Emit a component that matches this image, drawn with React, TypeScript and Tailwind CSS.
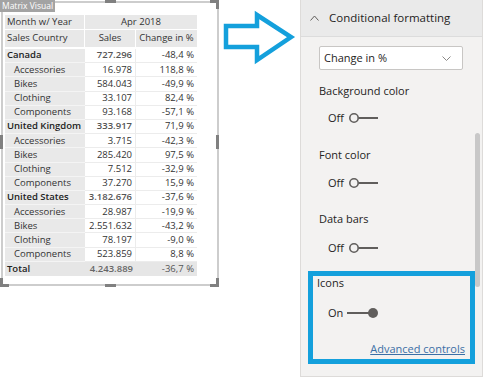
import React from 'react';

type Row = { label: string; sales: string; change: string; top?: boolean };

const ROWS: Row[] = [
  { label: 'Canada', sales: '727.296', change: '-48,4 %', top: true },
  { label: 'Accessories', sales: '16.978', change: '118,8 %' },
  { label: 'Bikes', sales: '584.043', change: '-49,9 %' },
  { label: 'Clothing', sales: '33.107', change: '82,4 %' },
  { label: 'Components', sales: '93.168', change: '-57,1 %' },
  { label: 'United Kingdom', sales: '333.917', change: '71,9 %', top: true },
  { label: 'Accessories', sales: '3.715', change: '-42,3 %' },
  { label: 'Bikes', sales: '285.420', change: '97,5 %' },
  { label: 'Clothing', sales: '7.512', change: '-32,9 %' },
  { label: 'Components', sales: '37.270', change: '15,9 %' },
  { label: 'United States', sales: '3.182.676', change: '-37,6 %', top: true },
  { label: 'Accessories', sales: '28.987', change: '-19,9 %' },
  { label: 'Bikes', sales: '2.551.632', change: '-43,2 %' },
  { label: 'Clothing', sales: '78.197', change: '-9,0 %' },
  { label: 'Components', sales: '523.859', change: '8,8 %' },
];

const Handle = ({ className }: { className: string }) => (
  <div className={`absolute bg-[#808080] ${className}`} />
);

const MatrixVisual = () => (
  <div className="relative w-[220px] h-[288px] shrink-0 p-[1px]">
    <div className="h-[285px] border-2 border-[#cdcdcd] pl-[2px] pt-[12px]">
      <div className="w-[192px] text-[9.5px] text-[#333333]">
        {/* header */}
        <div className="flex h-[14px] bg-[#e8e8e8]">
          <div className="w-[80px] pl-[2px] flex items-center border-r border-white">Month w/ Year</div>
          <div className="flex-1 flex items-center justify-center">Apr 2018</div>
        </div>
        <div className="flex h-[18px] bg-[#e8e8e8] border-t border-white">
          <div className="w-[80px] pl-[2px] flex items-center border-r border-white">Sales Country</div>
          <div className="w-[51px] flex items-center justify-center border-r border-white">Sales</div>
          <div className="flex-1 flex items-center justify-center">Change in %</div>
        </div>
        <div className="h-[2px]" />
        {ROWS.map((r, i) => (
          <div key={i} className="flex h-[14.2px]">
            <div
              className={`w-[80px] flex items-center bg-[#e9e9e9] border-b border-[#f4f4f4] whitespace-nowrap ${
                r.top ? 'pl-[2px] font-semibold text-[#222222]' : 'pl-[9px]'
              }`}
            >
              {r.label}
            </div>
            <div
              className={`w-[51px] flex items-center justify-end pr-[3px] border-b border-r border-[#ececec] ${
                r.top ? 'font-semibold text-[#555555]' : ''
              }`}
            >
              {r.sales}
            </div>
            <div className="flex-1 flex items-center justify-end pr-[3px] border-b border-[#ececec]">
              {r.change}
            </div>
          </div>
        ))}
        <div className="flex h-[14.2px] bg-[#e6e6e6]">
          <div className="w-[80px] pl-[2px] flex items-center font-semibold text-[#222222]">Total</div>
          <div className="w-[51px] flex items-center justify-end pr-[3px] font-semibold text-[#666666]">4.243.889</div>
          <div className="flex-1 flex items-center justify-end pr-[3px] text-[#555555]">-36,7 %</div>
        </div>
      </div>
    </div>

    {/* title tab */}
    <div className="absolute left-0 top-0 h-[12px] w-[55px] bg-[#a3a3a3] text-white text-[8.5px] leading-[12px] pl-[2px]">
      Matrix Visual
    </div>

    {/* selection handles */}
    <Handle className="left-[105px] top-0 w-[11px] h-[3px]" />
    <Handle className="left-[210px] top-0 w-[9px] h-[3px]" />
    <Handle className="left-[216px] top-0 w-[3px] h-[9px]" />
    <Handle className="left-0 top-[135px] w-[3px] h-[14px]" />
    <Handle className="left-[216px] top-[135px] w-[3px] h-[14px]" />
    <Handle className="left-0 top-[278px] w-[3px] h-[9px]" />
    <Handle className="left-0 top-[284px] w-[9px] h-[3px]" />
    <Handle className="left-[105px] top-[284px] w-[11px] h-[3px]" />
    <Handle className="left-[216px] top-[278px] w-[3px] h-[9px]" />
    <Handle className="left-[210px] top-[284px] w-[9px] h-[3px]" />
  </div>
);

const Arrow = () => (
  <div className="w-[80px] shrink-0">
    <svg width="80" height="70" viewBox="0 0 80 70">
      <polygon
        points="6,26 37,26 37,15 71,37 37,60 37,47 6,47"
        fill="none"
        stroke="#14a0dc"
        strokeWidth="4.5"
        strokeLinejoin="miter"
      />
    </svg>
  </div>
);

const Toggle = ({ on }: { on?: boolean }) => (
  <div className="flex items-center h-[14px] pl-[9px] text-[11px] text-[#252423]">
    <span className={on ? 'w-[19px]' : 'w-[21px]'}>{on ? 'On' : 'Off'}</span>
    <svg width="32" height="12" viewBox="0 0 32 12">
      {on ? (
        <>
          <line x1="0" y1="6" x2="22" y2="6" stroke="#605e5c" strokeWidth="2" />
          <circle cx="26" cy="6" r="5" fill="#605e5c" />
        </>
      ) : (
        <>
          <circle cx="5" cy="6" r="4.2" fill="none" stroke="#605e5c" strokeWidth="1.6" />
          <line x1="9.5" y1="6" x2="29" y2="6" stroke="#605e5c" strokeWidth="2" />
        </>
      )}
    </svg>
  </div>
);

const Label = ({ children }: { children: React.ReactNode }) => (
  <div className="h-[16px] leading-[16px] text-[11px] text-[#252423]">{children}</div>
);

const FormatPanel = () => (
  <div className="w-[183px] h-[377px] shrink-0 bg-[#f3f2f1] border-l border-r border-b border-[#dddbd9] flex flex-col">
    <div className="h-[37px] bg-[#eaeaea] border-b border-[#dcdcdc] flex items-center pl-[9px] gap-[10px] shrink-0">
      <svg width="9" height="6" viewBox="0 0 9 6">
        <polyline points="0.5,5.5 4.5,1 8.5,5.5" fill="none" stroke="#605e5c" strokeWidth="1" />
      </svg>
      <span className="text-[11.5px] text-[#252423]">Conditional formatting</span>
    </div>
    <div className="flex-1 flex">
      <div className="flex-1 pl-[18px] pt-[9px]">
        <div className="w-[144px] h-[24px] bg-white border border-[#c8c6c4] rounded-[2px] flex items-center justify-between pl-[4px] pr-[11px]">
          <span className="text-[11px] text-[#252423]">Change in %</span>
          <svg width="9" height="5" viewBox="0 0 9 5">
            <polyline points="0.5,0.5 4.5,4.5 8.5,0.5" fill="none" stroke="#8a8886" strokeWidth="1" />
          </svg>
        </div>
        <div className="mt-[13px]">
          <Label>Background color</Label>
        </div>
        <div className="mt-[12px]">
          <Toggle />
        </div>
        <div className="mt-[22px]">
          <Label>Font color</Label>
        </div>
        <div className="mt-[13px]">
          <Toggle />
        </div>
        <div className="mt-[21px]">
          <Label>Data bars</Label>
        </div>
        <div className="mt-[14px]">
          <Toggle />
        </div>
        <div className="mt-[16px] -ml-[11px] w-[167px] h-[93px] border-[5px] border-[#14a0dc] pl-[4px] pr-[5px] pt-[1px] flex flex-col">
          <div className="h-[12px] leading-[12px] text-[11px] text-[#252423]">Icons</div>
          <div className="mt-[17px] ml-[2px]">
            <Toggle on />
          </div>
          <div className="mt-[22px] self-end text-[11px] leading-[14px] text-[#3b6fa6] underline">Advanced controls</div>
        </div>
      </div>
      <div className="w-[7px] pt-[96px]">
        <div className="w-[5px] h-[154px] bg-[#c8c8c8] rounded-[3px]" />
      </div>
    </div>
  </div>
);

export default function App() {
  return (
    <div
      className="w-[486px] h-[377px] bg-white flex overflow-hidden"
      style={{ fontFamily: "'Open Sans', 'Noto Sans', sans-serif" }}
    >
      <MatrixVisual />
      <Arrow />
      <FormatPanel />
    </div>
  );
}
